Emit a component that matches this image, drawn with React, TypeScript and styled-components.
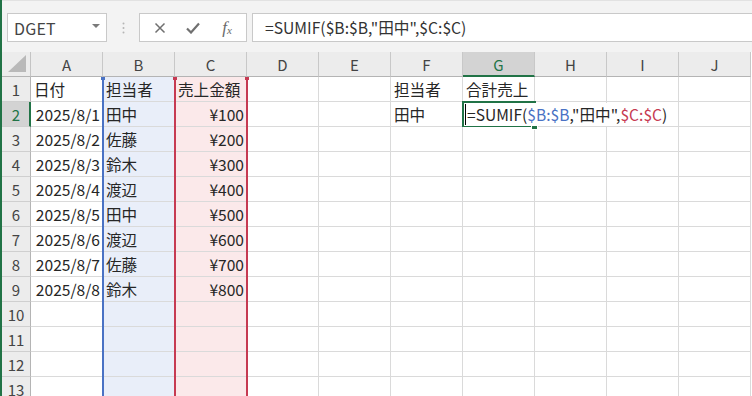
import { Fragment } from "react";
import styled, { createGlobalStyle } from "styled-components";

const GREEN = "#217346";
const BLUE = "#4a72c4";
const RED = "#c63a52";
const FONT = `"Noto Sans CJK JP", "Noto Sans", sans-serif`;

const COLS = ["A", "B", "C", "D", "E", "F", "G", "H", "I", "J"];

const data: string[][] = [
  ["日付", "担当者", "売上金額", "", "", "担当者", "合計売上"],
  ["2025/8/1", "田中", "¥100", "", "", "田中"],
  ["2025/8/2", "佐藤", "¥200"],
  ["2025/8/3", "鈴木", "¥300"],
  ["2025/8/4", "渡辺", "¥400"],
  ["2025/8/5", "田中", "¥500"],
  ["2025/8/6", "渡辺", "¥600"],
  ["2025/8/7", "佐藤", "¥700"],
  ["2025/8/8", "鈴木", "¥800"],
  [],
  [],
  [],
  [],
];

const tintFor = (col: number) =>
  col === 1 ? "#e9eef9" : col === 2 ? "#fbe9ea" : "#fff";

const isNumber = (v: string) => /^[\d¥/]+$/.test(v);

export default function App() {
  return (
    <>
      <GlobalStyle />
      <Window>
        <Toolbar>
          <NameBox>
            DGET
            <Caret />
          </NameBox>
          <Grip>
            <svg width="3" height="12" viewBox="0 0 3 12">
              <circle cx="1.5" cy="1.5" r="1" fill="#b5b5b5" />
              <circle cx="1.5" cy="6" r="1" fill="#b5b5b5" />
              <circle cx="1.5" cy="10.5" r="1" fill="#b5b5b5" />
            </svg>
          </Grip>
          <FxGroup>
            <IconButton>
              <svg width="12" height="12" viewBox="0 0 12 12">
                <path d="M1.5 1.5 L10.5 10.5 M10.5 1.5 L1.5 10.5" stroke="#707070" strokeWidth="1.5" />
              </svg>
            </IconButton>
            <IconButton>
              <svg width="14" height="12" viewBox="0 0 14 12">
                <path d="M1 6.5 L5 10.5 L13 1.5" stroke="#707070" strokeWidth="2.2" fill="none" />
              </svg>
            </IconButton>
            <IconButton>
              <FxLabel>
                f<sub>x</sub>
              </FxLabel>
            </IconButton>
          </FxGroup>
          <FormulaBox>=SUMIF($B:$B,"田中",$C:$C)</FormulaBox>
        </Toolbar>

        <Sheet>
          <Corner $row={1} $col={1}>
            <svg width="20" height="18" viewBox="0 0 20 18">
              <polygon points="19,0 19,17 1,17" fill="#b9b9b9" />
            </svg>
          </Corner>
          {COLS.map((c, ci) => (
            <ColHead key={c} $row={1} $col={ci + 2} $active={c === "G"}>
              {c}
            </ColHead>
          ))}
          {data.map((row, r) => (
            <Fragment key={r}>
              <RowHead $row={r + 2} $col={1} $active={r === 1}>
                {r + 1}
              </RowHead>
              {COLS.map((c, ci) => {
                const v = row[ci] ?? "";
                const right = r > 0 && isNumber(v);
                return (
                  <Cell
                    key={c}
                    $row={r + 2}
                    $col={ci + 2}
                    $bg={tintFor(ci)}
                    $right={right}
                  >
                    {r === 1 && c === "G" ? (
                      <Editor>
                        <TextCaret />
                        =SUMIF(<Ref $color={BLUE}>$B:$B</Ref>,"田中",
                        <Ref $color={RED}>$C:$C</Ref>)
                      </Editor>
                    ) : (
                      v
                    )}
                  </Cell>
                );
              })}
            </Fragment>
          ))}
          <RangeFrame $col={3} $color={BLUE} />
          <RangeFrame $col={4} $color={RED} />
          <ActiveFrame>
            <FillHandle />
          </ActiveFrame>
        </Sheet>
      </Window>
    </>
  );
}

const GlobalStyle = createGlobalStyle`
  html, body { margin: 0; padding: 0; background: #fff; }
  body { font-family: ${FONT}; }
`;

const Window = styled.div`
  width: 752px;
  height: 396px;
  box-sizing: border-box;
  border-left: 2px solid ${GREEN};
  overflow: hidden;
  display: flex;
  flex-direction: column;
  background: #fff;
`;

const Toolbar = styled.div`
  height: 52px;
  box-sizing: border-box;
  flex-shrink: 0;
  display: flex;
  align-items: flex-start;
  padding: 12px 0 0 5px;
  border-top: 1px solid #e2e2e2;
  background: #f3f3f3;
`;

const Box = styled.div`
  height: 29px;
  box-sizing: border-box;
  background: #fff;
  border: 1px solid #c9c9c9;
  display: flex;
  align-items: center;
`;

const NameBox = styled(Box)`
  width: 100px;
  padding: 0 6px 0 6px;
  justify-content: space-between;
  font-size: 16px;
  color: #444;
  letter-spacing: 0.2px;
`;

const Caret = styled.span`
  width: 0;
  height: 0;
  border-left: 4px solid transparent;
  border-right: 4px solid transparent;
  border-top: 4px solid #7a7a7a;
  margin-top: -4px;
`;

const Grip = styled.div`
  width: 32px;
  height: 29px;
  display: flex;
  align-items: center;
  justify-content: center;
`;

const FxGroup = styled(Box)`
  width: 108px;
  justify-content: space-around;
  padding: 0 4px;
`;

const IconButton = styled.span`
  width: 30px;
  display: flex;
  align-items: center;
  justify-content: center;
`;

const FxLabel = styled.span`
  font-family: "Liberation Serif", serif;
  font-style: italic;
  font-size: 17px;
  color: #6a6a6a;
  margin-left: 3px;

  sub {
    font-size: 11px;
    vertical-align: -1px;
  }
`;

const FormulaBox = styled(Box)`
  flex: 1;
  margin-left: 5px;
  margin-right: -1px;
  padding-left: 12px;
  font-size: 15.7px;
  color: #333;
  white-space: nowrap;
`;

const Sheet = styled.div`
  display: grid;
  grid-template-columns: 29px repeat(10, 72px);
  grid-auto-rows: 25px;
  font-size: 15.6px;
  color: #262626;
`;

type Place = { $row: number; $col: number };

const HeadBase = styled.div<Place>`
  grid-row: ${(p) => p.$row};
  grid-column: ${(p) => p.$col};
  box-sizing: border-box;
  background: #ececec;
  display: flex;
  align-items: center;
  justify-content: center;
  color: #444;
  font-size: 15px;
`;

const Corner = styled(HeadBase)`
  border-right: 1px solid #c4c4c4;
  border-bottom: 1px solid #b4b4b4;
  align-items: flex-end;
  justify-content: flex-end;
  padding: 0 3px 3px 0;
`;

const ColHead = styled(HeadBase)<{ $active?: boolean }>`
  background: ${(p) => (p.$active ? "#d3d3d3" : "#ececec")};
  color: ${(p) => (p.$active ? GREEN : "#444")};
  border-right: 1px solid #c8c8c8;
  border-bottom: ${(p) => (p.$active ? `2px solid ${GREEN}` : "1px solid #b4b4b4")};
  padding-top: ${(p) => (p.$active ? "1px" : "0")};
`;

const RowHead = styled(HeadBase)<{ $active?: boolean }>`
  background: ${(p) => (p.$active ? "#d3d3d3" : "#ececec")};
  color: ${(p) => (p.$active ? GREEN : "#444")};
  border-right: ${(p) => (p.$active ? `2px solid ${GREEN}` : "1px solid #b4b4b4")};
  border-bottom: 1px solid #cfcfcf;
  padding-left: ${(p) => (p.$active ? "1px" : "0")};
`;

const Cell = styled.div<Place & { $bg: string; $right?: boolean }>`
  grid-row: ${(p) => p.$row};
  grid-column: ${(p) => p.$col};
  box-sizing: border-box;
  background: ${(p) => p.$bg};
  border-right: 1px solid #dadada;
  border-bottom: 1px solid #dadada;
  display: flex;
  align-items: center;
  justify-content: ${(p) => (p.$right ? "flex-end" : "flex-start")};
  padding: 0 2px 1px 3px;
  white-space: nowrap;
  overflow: visible;
  min-width: 0;
`;

const Editor = styled.span`
  position: relative;
  z-index: 3;
  display: flex;
  align-items: center;
  height: 23px;
  margin: 1px 0 0 -2px;
  padding-right: 4px;
  background: #fff;
  white-space: pre;
  color: #262626;
`;

const TextCaret = styled.span`
  width: 1px;
  height: 21px;
  background: #000;
  margin: 0 1px 0 1px;
`;

const Ref = styled.span<{ $color: string }>`
  color: ${(p) => p.$color};
`;

const RangeFrame = styled.div<{ $col: number; $color: string }>`
  grid-column: ${(p) => p.$col};
  grid-row: 2 / span 13;
  position: relative;
  z-index: ${(p) => p.$col};
  margin: 0 -1px;
  border-left: 2px solid ${(p) => p.$color};
  border-right: 2px solid ${(p) => p.$color};
  pointer-events: none;

  &::before,
  &::after {
    content: "";
    position: absolute;
    top: 0;
    width: 4px;
    height: 3px;
    background: ${(p) => p.$color};
  }
  &::before { left: -3px; }
  &::after { right: -3px; }
`;

const ActiveFrame = styled.div`
  grid-column: 8;
  grid-row: 3;
  position: relative;
  z-index: 2;
  margin: -1px -1px 0 -1px;
  border: 2px solid ${GREEN};
  pointer-events: none;
`;

const FillHandle = styled.span`
  position: absolute;
  right: -4px;
  bottom: -5px;
  width: 5px;
  height: 5px;
  background: ${GREEN};
  border: 1px solid #fff;
`;
